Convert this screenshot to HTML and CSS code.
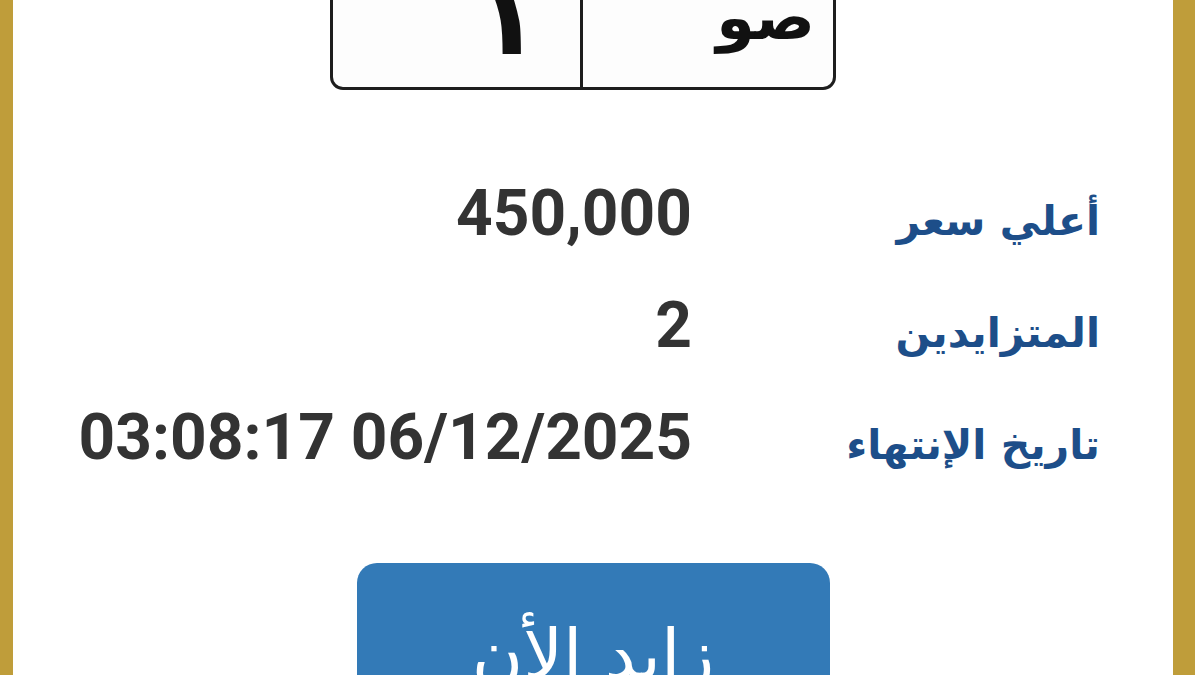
FILE: index.html
```html
<!DOCTYPE html>
<html lang="ar" dir="rtl">
<head>
<meta charset="utf-8">
<title>مزاد لوحة</title>
<link rel="stylesheet" href="styles.css">
</head>
<body>
<div class="frame">
  <div class="plate" dir="ltr">
    <div class="cell cell-num"><span class="num">١</span></div>
    <div class="cell cell-letters"><span class="letters">صو</span></div>
  </div>
  <div class="details">
    <div class="label">أعلي سعر</div>
    <div class="value">450,000</div>
    <div class="label">المتزايدين</div>
    <div class="value">2</div>
    <div class="label">تاريخ الإنتهاء</div>
    <div class="value" dir="ltr">03:08:17 06/12/2025</div>
  </div>
  <div class="actions">
    <button class="bid-btn" type="button">زايد الأن</button>
  </div>
</div>
</body>
</html>
```
FILE: styles.css
```css
html, body {
  margin: 0;
  padding: 0;
  background: #ffffff;
  height: 675px;
  overflow: hidden;
}
.frame {
  box-sizing: border-box;
  height: 675px;
  margin-right: 5px;
  border-left: 13px solid #bf9d3a;
  border-right: 22px solid #bf9d3a;
  background: #ffffff;
  overflow: hidden;
}
.plate {
  box-sizing: border-box;
  width: 506px;
  height: 140px;
  margin-top: -50px;
  margin-left: 317px;
  margin-right: auto;
  border: 3px solid #1e1e1e;
  border-radius: 0 0 13px 13px;
  display: grid;
  grid-template-columns: 1fr 1fr;
  background: #fdfdfd;
}
.cell {
  position: relative;
  overflow: hidden;
}
.cell-num {
  border-right: 3px solid #1e1e1e;
}
.num, .letters {
  position: absolute;
  font-family: "DejaVu Sans", sans-serif;
  font-weight: 700;
  color: #111;
  line-height: 1;
}
.num {
  font-size: 106px;
  top: 12px;
  right: 40px;
}
.letters {
  font-size: 62px;
  top: 34px;
  right: 18px;
}
.details {
  display: grid;
  grid-template-columns: 408px auto;
  grid-auto-rows: 112px;
  align-items: baseline;
  margin-top: 86px;
  padding-right: 73px;
}
.label {
  font-family: "DejaVu Sans", sans-serif;
  font-weight: 700;
  font-size: 41px;
  color: #1d4e89;
  text-align: right;
}
.value {
  font-family: Roboto, "Liberation Sans", sans-serif;
  font-weight: 700;
  font-size: 64px;
  color: #333333;
  text-align: right;
  white-space: nowrap;
}
.actions {
  display: flex;
  justify-content: center;
  margin-top: 51px;
}
.bid-btn {
  width: 473px;
  height: 140px;
  border: none;
  border-radius: 20px;
  background: #337ab7;
  color: #ffffff;
  font-family: "DejaVu Sans", sans-serif;
  font-size: 70px;
  padding: 44px 0 0;
  line-height: 1;
  align-self: flex-start;
}
```
